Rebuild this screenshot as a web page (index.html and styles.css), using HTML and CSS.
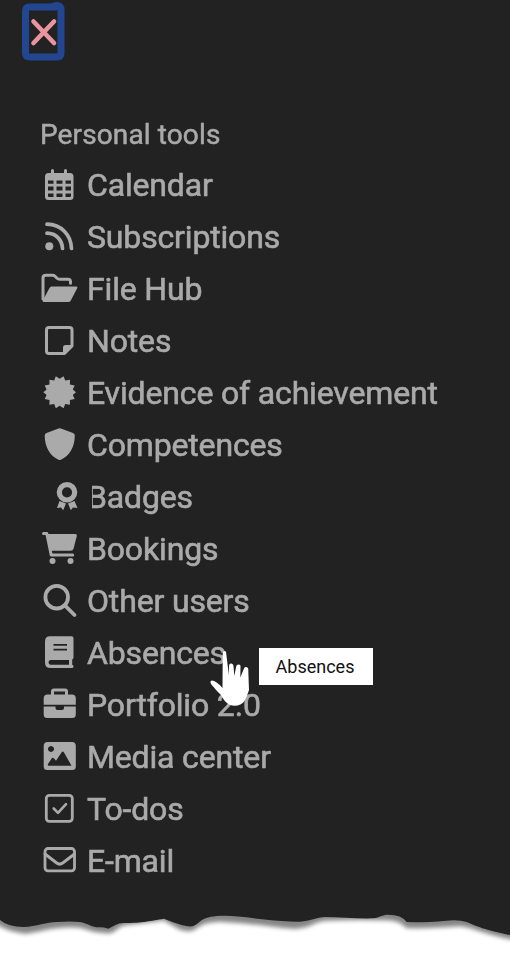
FILE: index.html
```html
<!DOCTYPE html>
<html lang="en">
<head>
<meta charset="utf-8">
<title>Personal tools</title>
<link rel="stylesheet" href="styles.css">
</head>
<body>
<div class="page">
<nav class="menu">
  <button class="close" aria-label="Close">
    <svg viewBox="0 0 50 64"><path class="frame" d="M35 7H9.500Q5.500 7 5.500 11.500V53Q5.500 57 10 57H37Q41 57 41 53V9.500Q41 6 37 5.500L34 6"/><path class="cross" d="M13.500 21.500 34 43M34 21.500 13.500 43"/></svg>
  </button>
  <h1 class="title">Personal tools</h1>
  <ul class="list">
    <li class="item"><svg class="icon" viewBox="0 0 40 40"><path fill-rule="evenodd" d="M11 5.500a1.500 1.500 0 0 1 3 0V8h10V5.500a1.500 1.500 0 0 1 3 0V8h3q3.500 0 3.500 3.500v20Q33.500 35 30 35H8.500Q5 35 5 31.500v-20Q5 8 8.500 8H11zM8 15.500v3.200h5.500v-3.200zm8.500 0v3.200h6v-3.200zm9 0v3.200h5.500v-3.200zM8 21.500v4h5.500v-4zm8.500 0v4h6v-4zm9 0v4h5.500v-4zM8 28.500V31q0 1 1 1h4.500v-3.500zm8.500 0V32h6v-3.500zm9 0V32H30q1 0 1-1v-2.500z"/></svg><span>Calendar</span></li>
    <li class="item"><svg class="icon" viewBox="0 0 40 40"><circle cx="9.300" cy="29.200" r="4"/><path class="line rss" d="M7 7.200C21 7.500 31 17.500 31.500 31.500M7 16.200C16 16.500 22 22.500 22.500 31.500"/></svg><span>Subscriptions</span></li>
    <li class="item"><svg class="icon" viewBox="0 0 40 40"><path class="line" d="M3 30V9Q3 6.300 6 6.300h6.500q1.500 0 2.500 1l2 2q1 1 2.700 1H28q2.500 0 2.500 2.500v1.500"/><path d="M11.500 17.500H36.500q1.500 0 .8 1.500l-6.500 12.500q-.8 1.500-2.500 1.500H4.500Q2 33 3 31L9.500 19q.7-1.500 2-1.500z"/></svg><span>File Hub</span></li>
    <li class="item"><svg class="icon" viewBox="0 0 40 40"><path class="line" d="M9 6.500H29.500Q32 6.500 32 9V25l-7.500 7.500H9Q6.500 32.500 6.500 30V9Q6.500 6.500 9 6.500z"/><path d="M23 33v-6.500Q23 24 25.500 24H32.500z"/></svg><span>Notes</span></li>
    <li class="item"><svg class="icon" viewBox="0 0 40 40"><path d="M19.700 5.700 23.600 3.200 25.200 7.500 30 6.700 29.900 11.400 34.700 12.500 32.800 16.500 36 19.200 32.800 21.900 34.700 25.900 29.900 27 30 31.700 25.200 30.900 23.600 35.200 19.700 32.700 15.800 35.200 14.200 30.900 9.400 31.700 9.500 27 4.700 25.900 6.600 21.900 3.400 19.200 6.600 16.500 4.700 12.500 9.500 11.400 9.400 6.700 14.200 7.500 15.800 3.200z"/></svg><span>Evidence of achievement</span></li>
    <li class="item"><svg class="icon" viewBox="0 0 40 40"><path d="M18.500 3.500q1.200-.6 2.400 0L33 8q1.800.8 1.800 2.800C34.700 22 29.500 31 20.900 34.700q-1.200.5-2.400 0C10 31 4.800 22 4.700 10.800q0-2 1.800-2.800z"/></svg><span>Competences</span></li>
    <li class="item"><svg class="icon" viewBox="0 0 40 40"><circle class="line ring" cx="27" cy="15.300" r="7.700"/><path d="m19.500 24 6.500 2.500-2.800 6.800-2.200-2.800-4 .5zm15 0-6.500 2.500 2.800 6.800 2.200-2.800 4.500.5z"/></svg><span class="cut">Badges</span></li>
    <li class="item"><svg class="icon" viewBox="0 0 40 40"><path d="M7.500 5H35.300q2 0 1.500 2l-3.200 12.500q-.6 2.300-3 2.300H11z"/><path class="line" d="M3.500 4.500H6.800L11.200 26h21.500"/><circle cx="12.500" cy="32" r="3"/><circle cx="30.500" cy="32" r="3"/></svg><span>Bookings</span></li>
    <li class="item"><svg class="icon" viewBox="0 0 40 40"><circle class="line lens" cx="16.700" cy="16.200" r="11.300"/><path class="line lens" d="m25 24.500 9.500 9.500"/></svg><span>Other users</span></li>
    <li class="item"><svg class="icon" viewBox="0 0 40 40"><path fill-rule="evenodd" d="M10 3.300H31.500Q33.500 3.300 33.500 5.300V24.500q0 1.300-1.300 2V31.800q1.300.3 1.300 1.700 0 1.500-1.500 1.500H10.500Q5 35 5 29.500V8.500Q5 3.300 10 3.300zM13.500 11v1.800H27V11zm0 4.700v1.800H27v-1.800zM10.500 27q-2 .3-2 2.300t2 2.500H29V27z"/></svg><span>Absences</span></li>
    <li class="item"><svg class="icon" viewBox="0 0 40 40"><path class="line" d="M12.500 10V6.500q0-1.500 1.500-1.500H25q1.500 0 1.500 1.500V10"/><path d="M7.500 9.500H32q3.800 0 3.800 3.800V19.800H3.700V13.300Q3.700 9.500 7.500 9.500zM3.700 21.500H15.500v1.500q0 2 2 2h4.500q2 0 2-2v-1.500H35.800V29.500Q35.800 33 32.300 33H7.200Q3.700 33 3.700 29.500z"/></svg><span>Portfolio 2.0</span></li>
    <li class="item"><svg class="icon" viewBox="0 0 40 40"><path fill-rule="evenodd" d="M7.700 5H32Q35.800 5 35.800 8.800V29.500Q35.800 33 32.300 33H7.200Q3.700 33 3.700 29.500V8.800Q3.700 5 7.700 5zM11 9a3 3 0 1 0 .01 0zM8.500 28.800H31.500L24 15.500q-1.200-1.800-2.500 0l-5.500 8.300-2.200-2.600q-1-1-2 0L8 27q-.8 1.300.5 1.800z"/></svg><span>Media center</span></li>
    <li class="item"><svg class="icon" viewBox="0 0 40 40"><rect class="line box" x="6.300" y="6.300" width="26" height="26" rx="3"/><path class="line check" d="m13.700 19.500 4.300 4.300 8-8.600"/></svg><span>To-dos</span></li>
    <li class="item"><svg class="icon" viewBox="0 0 40 40"><rect class="line box" x="5" y="7.500" width="29.500" height="22.300" rx="3"/><path class="line" d="m5 13 11.700 9q3 2.200 6 0L34.500 13"/></svg><span>E-mail</span></li>
  </ul>
</nav>
<svg class="torn" viewBox="0 0 1530 207">
  <path class="shade" d="M-30 -9V80L0 94Q30 112 75 116C110 114 140 102 170 100Q210 94 240 98C270 105 275 113 330 115C350 110 355 92 380 90Q450 83 490 76L540 104Q560 111 578 107C600 95 605 82 660 80Q740 85 820 95T900 99C930 98 940 80 980 77Q1080 73 1140 76Q1200 72 1218 99Q1290 101 1380 94C1420 97 1450 120 1560 138V-9z"/>
  <path class="sheet" d="M0 0V75Q25 96 70 96C110 95 140 81 170 81Q210 78 240 81C270 87 275 98 300 97Q312 97 325 101C345 92 350 85 370 84C430 84 450 77 492 71Q520 83 545 90T580 93C605 82 600 62 675 62Q710 62 780 72Q860 81 900 80C930 79 950 66 975 66C1020 67 1070 71 1120 70C1140 67 1145 59 1165 59Q1205 59 1220 81Q1270 83 1340 77Q1375 73 1400 81C1440 98 1460 106 1530 120V0z"/>
</svg>
<svg class="cursor" viewBox="0 0 40 58"><path d="M12.700 5Q12.700 2 14.500 2T16.300 5L18.800 26 19 16.500Q19.500 14 21.500 14.500T23.500 17L24.300 27 26.300 17Q27 15 29 15.500T30.500 18L30.300 28.500 34 19.500Q35 17.500 37 18.300 38.700 19 38.300 22L39 41Q37 48 34.500 52 31 57 24 56.800 18 56.500 14 51 11 45 6.500 41.500L1 35Q-.5 32 2 31.500 6 31.500 12.500 39z"/></svg>
<div class="tooltip">Absences</div>
</div>
</body>
</html>
```
FILE: styles.css
```css
body {
  margin: 0;
  background: #fff;
  font-family: Roboto, "Liberation Sans", sans-serif;
}

.page {
  position: relative;
  width: 510px;
  height: 964px;
  overflow: hidden;
}

.menu {
  box-sizing: border-box;
  height: 895px;
  background: #222;
  color: #aaa;
}

.close {
  display: block;
  width: 50px;
  height: 64px;
  margin-left: 20px;
  padding: 0;
  border: 0;
  background: none;
  filter: blur(0.5px);
}

.close svg {
  display: block;
}

.frame,
.cross,
.line {
  fill: none;
  stroke-linecap: round;
  stroke-linejoin: round;
}

.frame {
  stroke: #22468f;
  stroke-width: 7;
}

.cross {
  stroke: #e9959f;
  stroke-width: 4.6;
}

.title {
  margin: 0;
  padding: 51px 0 4px 40px;
  font-size: 28px;
  font-weight: 400;
  line-height: 40px;
  letter-spacing: 0.12px;
  -webkit-text-stroke: 0.5px #aaa;
  filter: blur(0.7px);
}

.list {
  margin: 0;
  padding: 0 0 0 40px;
  list-style: none;
  filter: blur(0.7px);
}

.item {
  display: flex;
  align-items: center;
  gap: 7px;
  height: 52px;
  font-size: 32px;
  line-height: 52px;
  letter-spacing: -0.16px;
  white-space: nowrap;
  -webkit-text-stroke: 0.6px #aaa;
}

.icon {
  flex: none;
  width: 40px;
  height: 40px;
  fill: #aaa;
}

.line {
  stroke: #aaa;
  stroke-width: 3;
}

.rss {
  stroke-width: 3.7;
}

.ring {
  stroke-width: 5.2;
}

.lens {
  stroke-width: 3.8;
}

.box {
  stroke-width: 2.8;
}

.check {
  stroke-width: 2.6;
}

.cut {
  clip-path: inset(0 0 0 5px);
}

.torn {
  display: block;
  width: 510px;
  height: 69px;
}

.shade {
  fill: #858585;
  filter: blur(7px);
}

.sheet {
  fill: #222;
}

.cursor {
  position: absolute;
  left: 210px;
  top: 649px;
  width: 40px;
  height: 58px;
  fill: #fff;
}

.tooltip {
  position: absolute;
  left: 259px;
  top: 648px;
  width: 112px;
  height: 37px;
  padding-right: 2px;
  background: #fff;
  color: #111;
  font-size: 18px;
  line-height: 37px;
  text-align: center;
}
```
